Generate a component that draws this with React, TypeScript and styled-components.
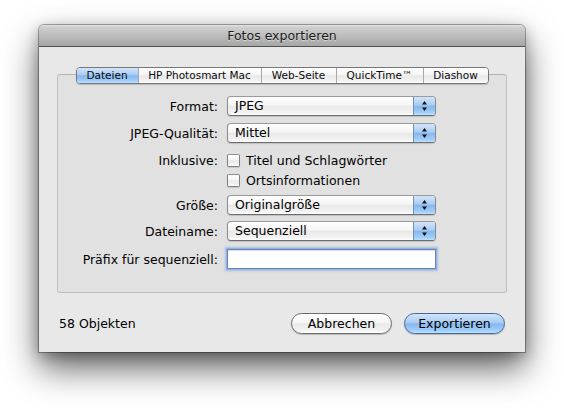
import React from "react";
import styled, { createGlobalStyle } from "styled-components";

const aqua =
  "linear-gradient(to bottom, #d2e5fa 0%, #a9ccf4 45%, #86b8ef 52%, #9ecdfa 85%, #c0e1ff 100%)";
const glass =
  "linear-gradient(to bottom, #ffffff 0%, #f5f5f5 45%, #e9e9e9 52%, #f2f2f2 85%, #ffffff 100%)";

const GlobalStyle = createGlobalStyle`
  html, body {
    margin: 0;
    padding: 0;
    background: #fff;
  }
  body {
    font-family: "DejaVu Sans", "Liberation Sans", sans-serif;
    color: #000;
  }
`;

const Stage = styled.div`
  width: 564px;
  height: 408px;
  box-sizing: border-box;
  padding: 25px 0 0 39px;
  background: #fff;
  overflow: hidden;
`;

const Window = styled.div`
  width: 486px;
  height: 327px;
  display: flex;
  flex-direction: column;
  background: #e8e8e8;
  border-radius: 5px 5px 0 0;
  box-shadow: 0 0 0 1px rgba(0, 0, 0, 0.32), 0 16px 34px rgba(0, 0, 0, 0.62),
    0 4px 14px rgba(0, 0, 0, 0.25);
`;

const TitleBar = styled.div`
  height: 22px;
  box-sizing: border-box;
  border-bottom: 1px solid #515151;
  border-radius: 5px 5px 0 0;
  background: linear-gradient(to bottom, #e4e4e4 0%, #cfcfcf 10%, #a6a6a6 100%);
  font-size: 12.5px;
  line-height: 21px;
  text-align: center;
  color: #1a1a1a;
  text-shadow: 0 1px 0 rgba(255, 255, 255, 0.45);
`;

const Content = styled.div`
  flex: 1;
  display: flex;
  flex-direction: column;
  padding: 20px 18px 0 18px;
`;

const GroupBox = styled.div`
  margin-top: 7px;
  height: 219px;
  box-sizing: border-box;
  display: flex;
  flex-direction: column;
  border: 1px solid #c0c0c0;
  border-top-color: #b3b3b3;
  border-radius: 3px;
  background: #e1e1e1;
`;

const TabStrip = styled.div`
  align-self: center;
  margin-top: -8px;
  height: 17px;
  box-sizing: border-box;
  display: flex;
  border: 1px solid #777;
  border-radius: 4px;
  overflow: hidden;
  box-shadow: 0 1px 1px rgba(0, 0, 0, 0.18);
`;

const Tab = styled.div<{ $w: number; $active?: boolean }>`
  width: ${(p) => p.$w}px;
  box-sizing: border-box;
  font-size: 10.5px;
  line-height: 15px;
  text-align: center;
  white-space: nowrap;
  color: #0a0a0a;
  background: ${(p) => (p.$active ? aqua : glass)};
  & + & {
    border-left: 1px solid ${(p) => (p.$active ? "#6b86b1" : "#a8a8a8")};
  }
`;

const Form = styled.div`
  display: flex;
  flex-direction: column;
  margin-top: 12px;
`;

const Row = styled.div<{ $gap: number }>`
  display: grid;
  grid-template-columns: 160px 209px;
  column-gap: 9px;
  align-items: center;
  height: 20px;
  margin-top: ${(p) => p.$gap}px;
`;

const Label = styled.span`
  text-align: right;
  font-size: 12.5px;
  white-space: nowrap;
`;

const Popup = styled.div`
  height: 20px;
  box-sizing: border-box;
  display: flex;
  border: 1px solid #8a8a8a;
  border-top-color: #9a9a9a;
  border-bottom-color: #6e6e6e;
  border-radius: 4px;
  overflow: hidden;
  background: ${glass};
  box-shadow: 0 1px 1px rgba(0, 0, 0, 0.15);
`;

const PopupValue = styled.span`
  flex: 1;
  padding-left: 7px;
  font-size: 12.5px;
  line-height: 18px;
`;

const Stepper = styled.span`
  width: 21px;
  display: flex;
  align-items: center;
  justify-content: center;
  border-left: 1px solid #7890b6;
  background: ${aqua};
`;

const CheckLine = styled.label`
  display: flex;
  align-items: center;
  gap: 6px;
  font-size: 12.5px;
  white-space: nowrap;
`;

const CheckBox = styled.span`
  width: 13px;
  height: 13px;
  box-sizing: border-box;
  border: 1px solid #7f7f7f;
  border-top-color: #909090;
  border-radius: 2px;
  background: ${glass};
  box-shadow: 0 1px 1px rgba(0, 0, 0, 0.12);
`;

const TextField = styled.div`
  height: 20px;
  box-sizing: border-box;
  border: 1px solid #6d87b1;
  background: #fff;
  box-shadow: 0 0 0 1px #8fb3e8, 0 0 2px 2px rgba(120, 160, 225, 0.55),
    inset 0 1px 1px rgba(0, 0, 0, 0.15);
`;

const Footer = styled.div`
  flex: 1;
  display: flex;
  align-items: center;
  padding: 2px 2px 0 2px;
  font-size: 12.5px;
`;

const Count = styled.span`
  margin-right: auto;
`;

const PushButton = styled.button<{ $primary?: boolean }>`
  width: 101px;
  height: 21px;
  padding: 0;
  margin-left: 12px;
  box-sizing: border-box;
  border: 1px solid ${(p) => (p.$primary ? "#46679b" : "#6c6c6c")};
  border-radius: 11px;
  background: ${(p) => (p.$primary ? aqua : glass)};
  box-shadow: 0 1px 1px rgba(0, 0, 0, 0.2);
  font-family: "DejaVu Sans", "Liberation Sans", sans-serif;
  font-size: 12.5px;
  line-height: 19px;
  color: #000;
`;

const Arrows = () => (
  <svg width="7" height="12" viewBox="0 0 7 12">
    <polygon points="3.5,1 6,4.5 1,4.5" fill="#111" />
    <polygon points="1,7.5 6,7.5 3.5,11" fill="#111" />
  </svg>
);

const Select: React.FC<{ value: string }> = ({ value }) => (
  <Popup>
    <PopupValue>{value}</PopupValue>
    <Stepper>
      <Arrows />
    </Stepper>
  </Popup>
);

const tabs = [
  { label: "Dateien", w: 61, active: true },
  { label: "HP Photosmart Mac", w: 123 },
  { label: "Web-Seite", w: 75 },
  { label: "QuickTime™", w: 87 },
  { label: "Diashow", w: 65 },
];

export default function App() {
  return (
    <>
      <GlobalStyle />
      <Stage>
        <Window>
          <TitleBar>Fotos exportieren</TitleBar>
          <Content>
            <GroupBox>
              <TabStrip>
                {tabs.map((t) => (
                  <Tab key={t.label} $w={t.w} $active={t.active}>
                    {t.label}
                  </Tab>
                ))}
              </TabStrip>
              <Form>
                <Row $gap={0}>
                  <Label>Format:</Label>
                  <Select value="JPEG" />
                </Row>
                <Row $gap={7}>
                  <Label>JPEG-Qualität:</Label>
                  <Select value="Mittel" />
                </Row>
                <Row $gap={7}>
                  <Label>Inklusive:</Label>
                  <CheckLine>
                    <CheckBox />
                    Titel und Schlagwörter
                  </CheckLine>
                </Row>
                <Row $gap={0}>
                  <span />
                  <CheckLine>
                    <CheckBox />
                    Ortsinformationen
                  </CheckLine>
                </Row>
                <Row $gap={5}>
                  <Label>Größe:</Label>
                  <Select value="Originalgröße" />
                </Row>
                <Row $gap={6}>
                  <Label>Dateiname:</Label>
                  <Select value="Sequenziell" />
                </Row>
                <Row $gap={8}>
                  <Label>Präfix für sequenziell:</Label>
                  <TextField />
                </Row>
              </Form>
            </GroupBox>
            <Footer>
              <Count>58 Objekten</Count>
              <PushButton>Abbrechen</PushButton>
              <PushButton $primary>Exportieren</PushButton>
            </Footer>
          </Content>
        </Window>
      </Stage>
    </>
  );
}
